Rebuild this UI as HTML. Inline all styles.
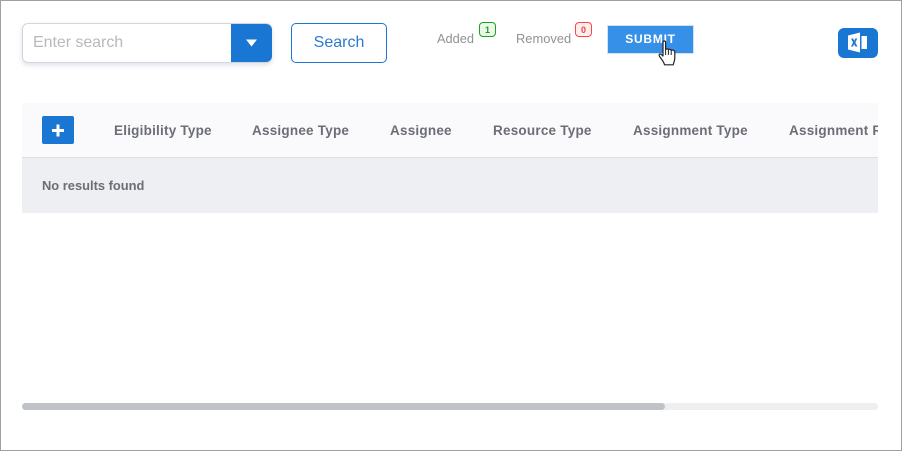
<!DOCTYPE html>
<html>
<head>
<meta charset="utf-8">
<style>
html,body{margin:0;padding:0;background:#fff}
body{width:902px;height:451px;position:relative;overflow:hidden;font-family:"Liberation Sans",sans-serif}
div,span{position:absolute;box-sizing:border-box;white-space:nowrap}
.frame{left:0;top:0;width:902px;height:451px;border:1px solid #a0a0a0;border-right-width:1px}
.th{top:122px;font-size:13.5px;line-height:17px;font-weight:bold;color:#6c6e75;letter-spacing:.22px}
</style>
</head>
<body>
<div class="frame"></div>

<div style="left:22px;top:23px;width:250px;height:40px;background:#fff;border:1px solid #d3d6de;border-radius:6px;box-shadow:0 2px 5px rgba(70,90,140,.18)"></div>
<div style="left:33px;top:33px;font-size:16px;line-height:20px;letter-spacing:-.05px;color:#b9b9b9">Enter search</div>
<div style="left:231px;top:24px;width:41px;height:38px;background:#1976d2;border-radius:0 6px 6px 0"></div>
<svg style="position:absolute;left:246px;top:39px" width="11" height="8"><path d="M0 .5H11L5.5 7.5Z" fill="#fff"/></svg>

<div style="left:291px;top:23px;width:96px;height:40px;border:1px solid #1976d2;border-radius:5px;background:#fff;color:#2a7bd0;font-size:16px;line-height:37px;text-align:center">Search</div>

<div style="left:437px;top:30px;font-size:12.8px;line-height:17px;color:#929292">Added</div>
<div style="left:479px;top:22px;width:17px;height:15px;border:1px solid #20a020;border-radius:4px;background:#e9f8e9;color:#20a020;font-size:9px;font-weight:bold;line-height:14px;text-align:center">1</div>
<div style="left:516px;top:30px;font-size:12.9px;line-height:17px;color:#929292">Removed</div>
<div style="left:575px;top:22px;width:17px;height:15px;border:1px solid #f44;border-radius:4px;background:#fdeeee;color:#e44;font-size:9px;font-weight:bold;line-height:14px;text-align:center">0</div>

<div style="left:607px;top:25px;width:87px;height:29px;background:#3790e8;border:1px solid #cfe2f6;color:#fff;font-size:12px;font-weight:bold;letter-spacing:.75px;line-height:27px;text-align:center">SUBMIT</div>
<svg style="position:absolute;left:658px;top:40px" width="20" height="26" viewBox="0 0 20 26">
<path d="M5 2.2C5 .6 7.6 .6 7.6 2.2V9.5C8 8.6 10.2 8.6 10.4 9.8C10.8 9 13 9.1 13.2 10.4C13.6 9.7 16.8 10 16.8 11.8V17.5C16.8 20 16 22 15.2 24.8H6.5C6 22 4 20 1.6 16.5C.6 15 1.2 13.4 3 14.2L5 16Z" fill="#fff" stroke="#222" stroke-width="1.2" stroke-linejoin="round"/>
<path d="M7.6 9.5V15M10.4 9.8V15M13.2 10.4V15" stroke="#222" stroke-width="1" fill="none"/>
</svg>

<div style="left:838px;top:28px;width:40px;height:30px;background:#1976d2;border-radius:6px"></div>
<svg style="position:absolute;left:848px;top:32px" width="20" height="21" viewBox="0 0 20 21">
<path d="M0 3.5L12 .5V20.5L0 17.5Z" fill="#fff"/>
<path d="M13.5 4H19V17H13.5Z" fill="#fff"/>
<path d="M3 6.5H5.2L6.2 9L7.3 6.5H9.3L7.3 10.5L9.4 14.5H7.3L6.2 12L5 14.5H3L5.1 10.5Z" fill="#1976d2"/>
</svg>

<div style="left:22px;top:103px;width:856px;height:55px;background:#fafafd;border-bottom:1px solid #dcdde0"></div>
<div style="left:22px;top:158px;width:856px;height:55px;background:#eeeff3"></div>
<div style="left:42px;top:116px;width:32px;height:28px;background:#1976d2;border-radius:2px"></div>
<svg style="position:absolute;left:51px;top:124px" width="14" height="13"><path d="M5.5 0.5H8.5V5H13V8H8.5V12.5H5.5V8H1V5H5.5Z" fill="#fff"/></svg>

<div class="th" style="left:114px">Eligibility Type</div>
<div class="th" style="left:252px">Assignee Type</div>
<div class="th" style="left:390px">Assignee</div>
<div class="th" style="left:493px">Resource Type</div>
<div class="th" style="left:633px">Assignment Type</div>
<div style="left:789px;top:122px;width:89px;height:17px;overflow:hidden;font-size:13.5px;line-height:17px;font-weight:bold;color:#6c6e75;letter-spacing:.22px">Assignment Role</div>
<div style="left:42px;top:177px;font-size:12.9px;line-height:17px;font-weight:bold;color:#6c6e75">No results found</div>

<div style="left:22px;top:403px;width:856px;height:7px;background:#eeeff0;border-radius:4px"></div>
<div style="left:22px;top:403px;width:643px;height:7px;background:#bfc3c7;border-radius:4px"></div>
</body>
</html>
